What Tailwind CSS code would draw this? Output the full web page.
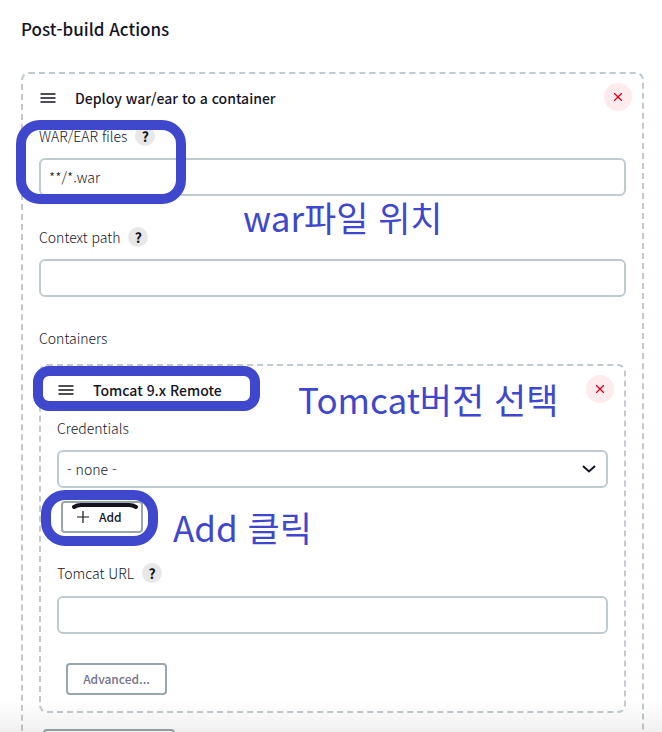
<!DOCTYPE html>
<html lang="ko">
<head>
    <meta charset="UTF-8">
    <meta name="viewport" content="width=device-width, initial-scale=1.0">
    <title>Post-build Actions</title>
    <script src="https://cdn.jsdelivr.net/npm/@tailwindcss/browser@4"></script>
</head>
<body class="relative flex h-screen flex-col overflow-hidden bg-white pt-[15px] pr-[18px] pl-[21px] font-['Noto_Sans_CJK_KR',sans-serif] text-sm leading-5 text-[#14141f]">
    <h1 class="text-[17px] leading-7 font-medium">Post-build Actions</h1>

    <main class="mt-[29px] min-h-0 flex-1 rounded-t-lg border-2 border-b-0 border-dashed border-[#c0cacf] px-4 pt-[9px]">
        <div class="-mr-1.5 flex h-7 items-center">
            <svg class="h-4 w-4.5" viewBox="0 0 18 16" stroke="#14141f" stroke-width="1.5" fill="none">
                <path d="M1.500 5h15M1.500 9h15M1.500 13h15"/>
            </svg>
            <h2 class="ml-4.5 pt-0.5 font-medium">Deploy war/ear to a container</h2>
            <button type="button" aria-label="Delete" class="ml-auto flex h-7 w-7 items-center justify-center rounded-full bg-[#fdebed]">
                <svg class="h-2 w-2" viewBox="0 0 8 8" stroke="#e6001f" stroke-width="1.3"><path d="M0 0l8 8M8 0L0 8"/></svg>
            </button>
        </div>

        <div class="relative mt-[15px]">
            <div class="flex items-center gap-2">
                <label for="war" class="font-light">WAR/EAR files</label>
                <button type="button" aria-label="Help" class="h-5 w-5 rounded-full bg-[#e8e8e8] font-bold">?</button>
            </div>
            <input id="war" type="text" value="**/*.war" class="mt-3 block h-[38px] w-full rounded-md border-2 border-[#c0cacf] px-2 font-light">
            <div class="pointer-events-none absolute -top-1.5 -left-[23px] h-[84px] w-[170px] rounded-3xl border-10 border-[#3f48cc]"></div>
            <span class="absolute top-[67px] left-[204px] text-[35px] leading-12 whitespace-nowrap text-[#3f48cc]">war파일 위치</span>
        </div>

        <div class="mt-[31px]">
            <div class="flex items-center gap-2">
                <label for="context" class="font-light">Context path</label>
                <button type="button" aria-label="Help" class="h-5 w-5 rounded-full bg-[#e8e8e8] font-bold">?</button>
            </div>
            <input id="context" type="text" class="mt-3 block h-[38px] w-full rounded-md border-2 border-[#c0cacf] px-2 font-light">
        </div>

        <h3 class="mt-[31px] font-light">Containers</h3>

        <section class="mt-4 rounded-lg border-2 border-dashed border-[#c0cacf] px-4 pt-[9px] pb-4">
            <div class="relative -mr-1.5 flex h-7 items-center">
                <svg class="h-4 w-4.5" viewBox="0 0 18 16" stroke="#14141f" stroke-width="1.5" fill="none">
                    <path d="M1.500 5h15M1.500 9h15M1.500 13h15"/>
                </svg>
                <h2 class="ml-4.5 pt-0.5 font-medium">Tomcat 9.x Remote</h2>
                <button type="button" aria-label="Delete" class="ml-auto flex h-7 w-7 items-center justify-center rounded-full bg-[#fdebed]">
                    <svg class="h-2 w-2" viewBox="0 0 8 8" stroke="#e6001f" stroke-width="1.3"><path d="M0 0l8 8M8 0L0 8"/></svg>
                </button>
                <div class="pointer-events-none absolute -top-[9px] -left-6 h-[45px] w-[227px] rounded-2xl border-10 border-[#3f48cc]"></div>
                <span class="absolute top-0 left-[241px] text-[35px] leading-12 whitespace-nowrap text-[#3f48cc]">Tomcat버전 선택</span>
            </div>

            <div class="mt-[15px]">
                <label for="credentials" class="block font-light">Credentials</label>
                <div class="relative mt-3">
                    <select id="credentials" class="block h-[38px] w-full appearance-none rounded-md border-2 border-[#c0cacf] px-2 font-light">
                        <option>- none -</option>
                    </select>
                    <svg class="pointer-events-none absolute top-[15px] right-3 h-2 w-3.5" viewBox="0 0 14 8" fill="none" stroke="#14141f" stroke-width="2"><path d="M1 1L7 6.500L13 1"/></svg>
                </div>
            </div>

            <div class="relative mt-[13px] ml-1 w-[82px]">
                <button type="button" class="flex h-8 w-full items-center gap-2.5 rounded border-2 border-[#98a6ad] pl-3.5 text-xs font-medium">
                    <svg class="h-3 w-3" viewBox="0 0 12 12" stroke="#14141f" stroke-width="1.2"><path d="M0 6h12M6 0v12"/></svg>
                    Add
                </button>
                <svg class="pointer-events-none absolute top-0.5 left-2.5 h-1.5 w-[68px]" viewBox="0 0 68 6" fill="none" stroke="#14141f" stroke-width="4" stroke-linecap="round"><path d="M3 4Q6 2 10 2H58Q62 2 65 4"/></svg>
                <div class="pointer-events-none absolute -top-[11px] -left-5 h-14 w-[117px] rounded-3xl border-10 border-[#3f48cc]"></div>
                <span class="absolute top-0.5 left-28 text-[35px] leading-12 whitespace-nowrap text-[#3f48cc]">Add 클릭</span>
            </div>

            <div class="mt-[30px]">
                <div class="flex items-center gap-2">
                    <label for="url" class="font-light">Tomcat URL</label>
                    <button type="button" aria-label="Help" class="h-5 w-5 rounded-full bg-[#e8e8e8] font-bold">?</button>
                </div>
                <input id="url" type="text" class="mt-[13px] block h-[38px] w-full rounded-md border-2 border-[#c0cacf] px-2 font-light">
            </div>

            <button type="button" class="mt-[29px] ml-[9px] block h-8 w-[101px] rounded border-2 border-[#98a6ad] text-xs font-medium text-[#73738c]">Advanced...</button>
        </section>

        <button type="button" aria-label="Add Container" class="mt-4 ml-1 block h-8 w-[132px] rounded border-2 border-[#98a6ad]"></button>
    </main>

    <div class="pointer-events-none absolute inset-x-0 bottom-0 h-8 bg-linear-to-b from-transparent to-black/6"></div>
</body>
</html>
